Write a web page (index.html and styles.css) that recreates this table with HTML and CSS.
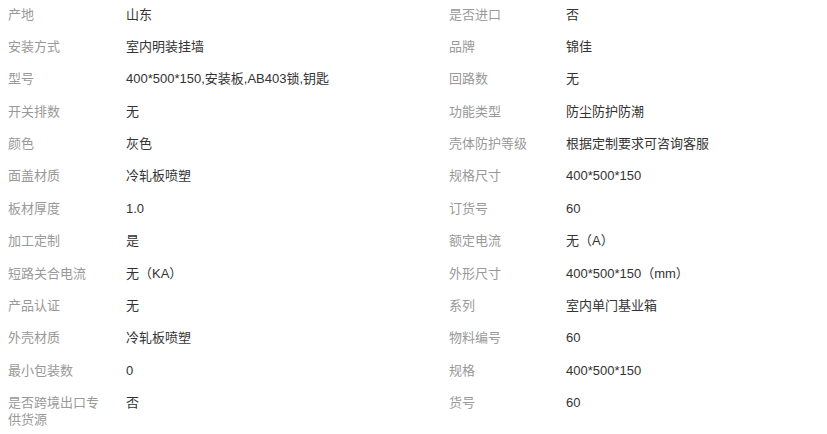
FILE: index.html
```html
<!DOCTYPE html>
<html lang="zh-CN">
<head>
<meta charset="utf-8">
<link rel="stylesheet" href="styles.css">
</head>
<body>
<div class="attrs">
  <div class="row"><div class="k">产地</div><div class="v">山东</div><div class="k">是否进口</div><div class="v">否</div></div>
  <div class="row"><div class="k">安装方式</div><div class="v">室内明装挂墙</div><div class="k">品牌</div><div class="v">锦佳</div></div>
  <div class="row"><div class="k">型号</div><div class="v">400*500*150,安装板,AB403锁,钥匙</div><div class="k">回路数</div><div class="v">无</div></div>
  <div class="row"><div class="k">开关排数</div><div class="v">无</div><div class="k">功能类型</div><div class="v">防尘防护防潮</div></div>
  <div class="row"><div class="k">颜色</div><div class="v">灰色</div><div class="k">壳体防护等级</div><div class="v">根据定制要求可咨询客服</div></div>
  <div class="row"><div class="k">面盖材质</div><div class="v">冷轧板喷塑</div><div class="k">规格尺寸</div><div class="v">400*500*150</div></div>
  <div class="row"><div class="k">板材厚度</div><div class="v">1.0</div><div class="k">订货号</div><div class="v">60</div></div>
  <div class="row"><div class="k">加工定制</div><div class="v">是</div><div class="k">额定电流</div><div class="v">无（A）</div></div>
  <div class="row"><div class="k">短路关合电流</div><div class="v">无（KA）</div><div class="k">外形尺寸</div><div class="v">400*500*150（mm）</div></div>
  <div class="row"><div class="k">产品认证</div><div class="v">无</div><div class="k">系列</div><div class="v">室内单门基业箱</div></div>
  <div class="row"><div class="k">外壳材质</div><div class="v">冷轧板喷塑</div><div class="k">物料编号</div><div class="v">60</div></div>
  <div class="row"><div class="k">最小包装数</div><div class="v">0</div><div class="k">规格</div><div class="v">400*500*150</div></div>
  <div class="row"><div class="k">是否跨境出口专供货源</div><div class="v">否</div><div class="k">货号</div><div class="v">60</div></div>
</div>
</body>
</html>
```
FILE: styles.css
```css
html, body {
  margin: 0;
  padding: 0;
  background: #fff;
}
body {
  font-family: "Liberation Sans", Arial, "Noto Sans CJK SC", sans-serif;
  font-size: 13px;
  line-height: 17px;
}
.attrs {
  margin-top: -2.2px;
  padding-left: 8px;
}
.row {
  display: grid;
  grid-template-columns: 118px 323px 117px 1fr;
  padding: 7.7px 0;
}
.k {
  color: #999;
  padding-right: 18px;
}
.v {
  color: #333;
}
```
